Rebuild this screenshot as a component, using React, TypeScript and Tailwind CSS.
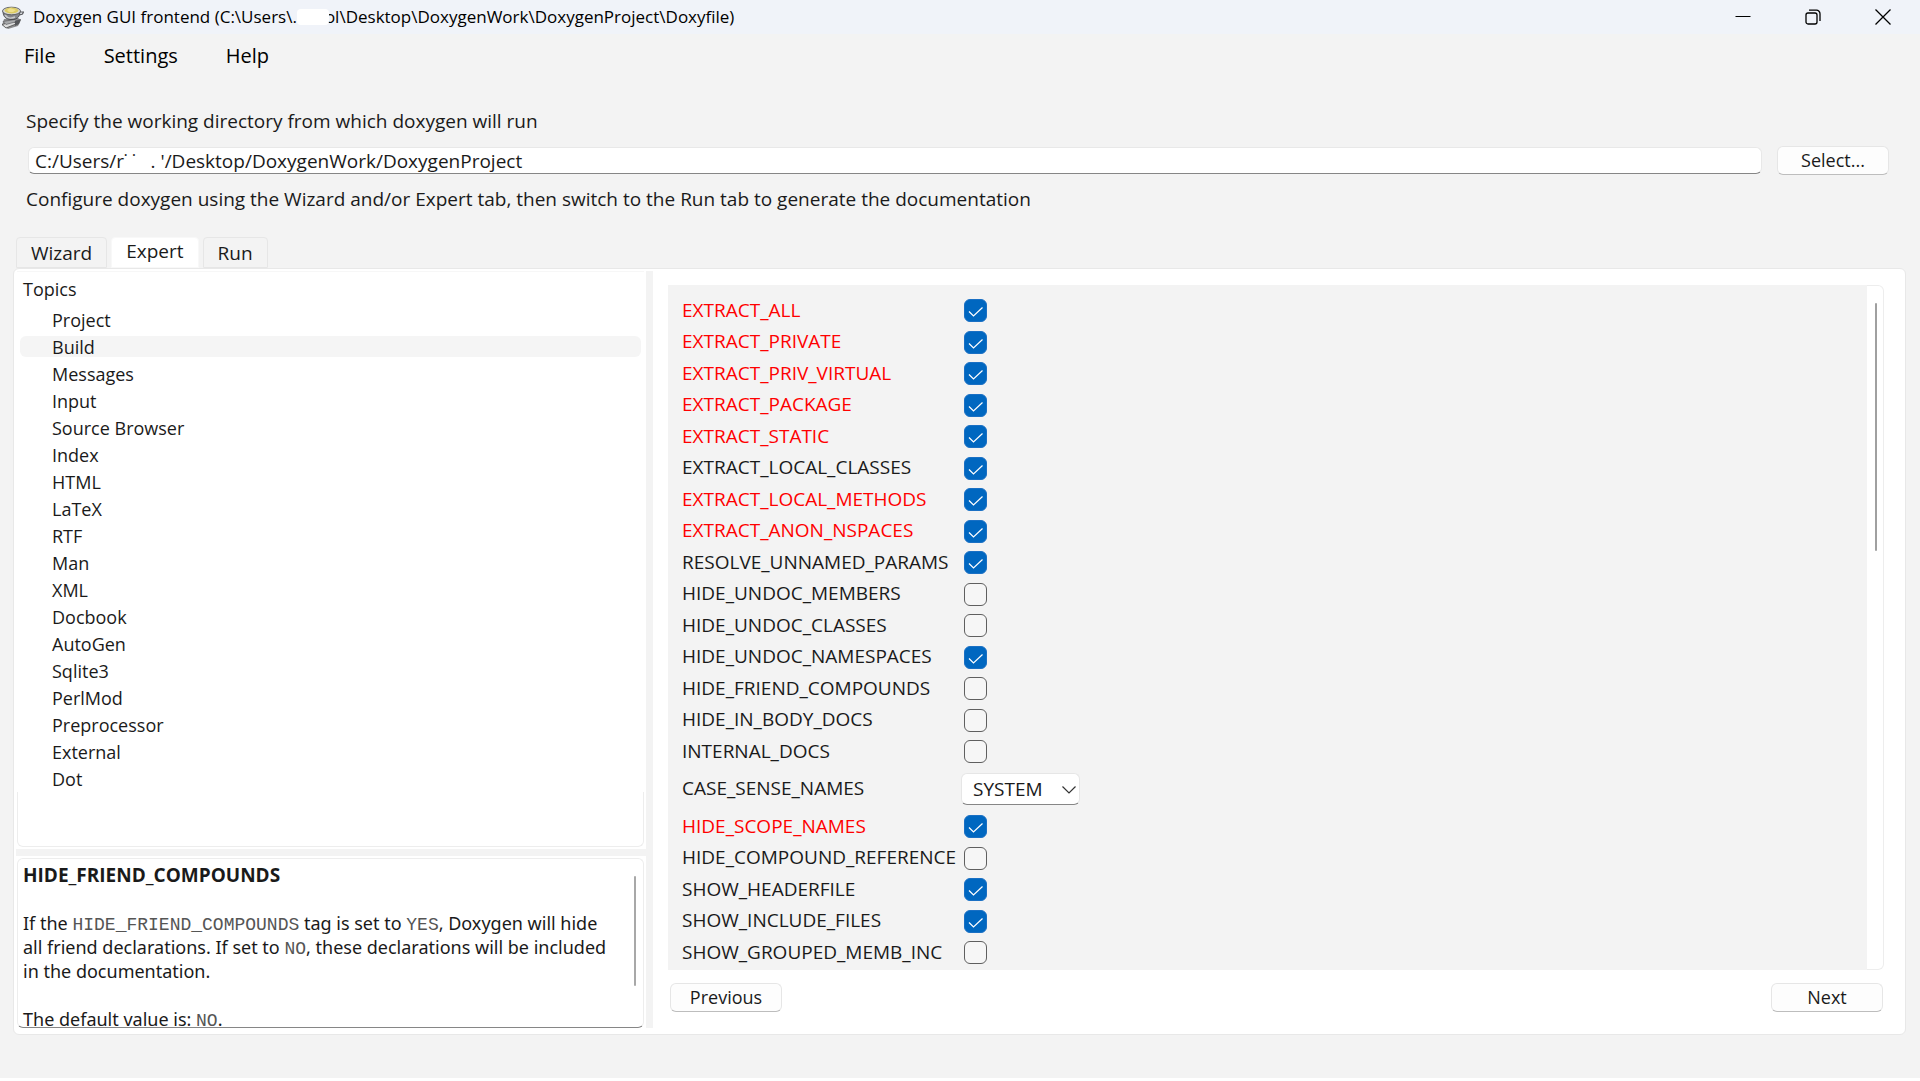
import { useState } from "react";
import clsx from "clsx";

interface Option {
  name: string;
  /** Differs from the doxygen default, drawn in red. */
  changed?: boolean;
  checked?: boolean;
  choices?: string[];
}

const TOPICS = [
  "Project",
  "Build",
  "Messages",
  "Input",
  "Source Browser",
  "Index",
  "HTML",
  "LaTeX",
  "RTF",
  "Man",
  "XML",
  "Docbook",
  "AutoGen",
  "Sqlite3",
  "PerlMod",
  "Preprocessor",
  "External",
  "Dot",
];

const OPTIONS: Option[] = [
  { name: "EXTRACT_ALL", changed: true, checked: true },
  { name: "EXTRACT_PRIVATE", changed: true, checked: true },
  { name: "EXTRACT_PRIV_VIRTUAL", changed: true, checked: true },
  { name: "EXTRACT_PACKAGE", changed: true, checked: true },
  { name: "EXTRACT_STATIC", changed: true, checked: true },
  { name: "EXTRACT_LOCAL_CLASSES", checked: true },
  { name: "EXTRACT_LOCAL_METHODS", changed: true, checked: true },
  { name: "EXTRACT_ANON_NSPACES", changed: true, checked: true },
  { name: "RESOLVE_UNNAMED_PARAMS", checked: true },
  { name: "HIDE_UNDOC_MEMBERS" },
  { name: "HIDE_UNDOC_CLASSES" },
  { name: "HIDE_UNDOC_NAMESPACES", checked: true },
  { name: "HIDE_FRIEND_COMPOUNDS" },
  { name: "HIDE_IN_BODY_DOCS" },
  { name: "INTERNAL_DOCS" },
  { name: "CASE_SENSE_NAMES", choices: ["SYSTEM", "NO", "YES"] },
  { name: "HIDE_SCOPE_NAMES", changed: true, checked: true },
  { name: "HIDE_COMPOUND_REFERENCE" },
  { name: "SHOW_HEADERFILE", checked: true },
  { name: "SHOW_INCLUDE_FILES", checked: true },
  { name: "SHOW_GROUPED_MEMB_INC" },
];

const pushButton =
  "h-[29px] w-28 shrink-0 rounded-md border border-[#e6e6e6] border-b-[#bdbdbd] bg-[#fdfdfd] pb-0.5 text-center text-lg leading-6";

function AppIcon() {
  return (
    <svg viewBox="0 0 24 24" className="size-6 shrink-0" aria-hidden="true">
      <path d="M4 14l14-1 3 2-3 6-10 3-6-4z" fill="#8b8b8d" />
      <path d="M2 19.500l12-3 2 2.500-10 4z" fill="#dcdcdc" stroke="#4b4b4b" strokeWidth="0.8" />
      <path d="M3 16.500l12-2 2 2-11 3z" fill="#a9aaac" stroke="#55565a" strokeWidth="0.6" />
      <path d="M15 16l6-2-2 5-4 2z" fill="#55565a" />
      <path d="M3 6c0 6 3 8.500 9 8.500s8-3.500 8-8.500z" fill="#85868a" stroke="#3f4042" strokeWidth="0.8" />
      <path d="M5 10c2 3 6 4 10 2" fill="none" stroke="#c9cacc" strokeWidth="1.4" />
      <ellipse cx="11.500" cy="6" rx="9" ry="3.800" fill="#d9d9d6" stroke="#55565a" strokeWidth="0.9" />
      <ellipse cx="11.500" cy="5.500" rx="7" ry="2.900" fill="#dccb62" />
      <path d="M7 5l3-2 3 1 3 1-3 2-4 0z" fill="#efe08c" />
      <path d="M20 7l3.500 0-1 2-3 1" fill="none" stroke="#55565a" strokeWidth="1.2" />
    </svg>
  );
}

function TitleBar() {
  return (
    <header className="flex h-[34px] items-center bg-[#f0f3f9] pr-0.5">
      <AppIcon />
      <h1 className="ml-[9px] flex items-center whitespace-pre text-[17px] text-black">
        Doxygen GUI frontend (C:\Users\.
        <span className="z-10 -mr-1 h-4 w-8 rounded bg-white" />
        ol\Desktop\DoxygenWork\DoxygenProject\Doxyfile)
      </h1>
      <div className="ml-auto flex h-full text-black">
        <button aria-label="Minimize" className="grid w-[70px] place-items-center">
          <svg viewBox="0 0 16 16" className="size-4" fill="none" stroke="currentColor">
            <path d="M0.500 7.500h15" />
          </svg>
        </button>
        <button aria-label="Restore" className="grid w-[70px] place-items-center">
          <svg viewBox="0 0 16 16" className="size-4" fill="none" stroke="currentColor" strokeWidth="1.300">
            <rect x="1" y="4" width="11" height="11" rx="2" />
            <path d="M4 1.200h7.500a3.500 3.500 0 0 1 3.500 3.500v7.300" />
          </svg>
        </button>
        <button aria-label="Close" className="grid w-[70px] place-items-center">
          <svg viewBox="0 0 16 16" className="size-4" fill="none" stroke="currentColor" strokeWidth="1.300">
            <path d="M0.500 0.500l15 15M15.500 0.500l-15 15" />
          </svg>
        </button>
      </div>
    </header>
  );
}

function TopicTree() {
  const [active, setActive] = useState("Build");
  return (
    <div className="flex flex-1 flex-col pl-px pr-0.5 text-lg">
      <div className="border-t border-[#f7f7f7] px-[3px]">
        <div className="flex h-[34px] items-center pl-[3px]">Topics</div>
        <ul>
          {TOPICS.map((t) => (
            <li key={t} className="flex h-[27px] items-center">
              <button
                onClick={() => setActive(t)}
                className={clsx(
                  "flex h-[21px] w-full items-center rounded-md pl-8 text-left",
                  t === active && "bg-[#f5f5f5]",
                )}
              >
                {t}
              </button>
            </li>
          ))}
        </ul>
      </div>
      <div className="flex-1 rounded-b-md border-x border-b border-[#ededed]" />
    </div>
  );
}

function HelpBox() {
  return (
    <div className="relative ml-px mr-0.5 h-[170px] overflow-hidden rounded-md border border-[#ededed] border-b-[#868686] pl-[5px] pt-1 leading-6">
      <p className="font-bold">HIDE_FRIEND_COMPOUNDS</p>
      <div className="font-['Noto_Sans',sans-serif] text-lg leading-6">
        <p className="mt-6">
          If the <Code>HIDE_FRIEND_COMPOUNDS</Code> tag is set to <Code>YES</Code>, Doxygen will hide
          <br />
          all friend declarations. If set to <Code>NO</Code>, these declarations will be included
          <br />
          in the documentation.
        </p>
        <p className="mt-6">
          The default value is: <Code>NO</Code>.
        </p>
      </div>
      <div className="absolute right-[7px] top-[17px] h-[110px] w-0.5 rounded bg-[#a8a8a8]" />
    </div>
  );
}

function Code({ children }: { children: string }) {
  return <code className="font-['Liberation_Mono',monospace] text-lg leading-none text-[#555]">{children}</code>;
}

function OptionRow({ option }: { option: Option }) {
  return (
    <div className={clsx("flex items-center", option.choices ? "h-11" : "odd:h-[31px] even:h-8")}>
      <label
        htmlFor={option.name}
        className={clsx("w-[282px] shrink-0 pb-0.5", option.changed && "text-[#ff0000]")}
      >
        {option.name}
      </label>
      {option.choices ? (
        <div className="relative -ml-[3px]">
          <select
            id={option.name}
            className="h-8 w-[119px] appearance-none rounded-md border border-[#e6e6e6] border-b-[#868686] bg-white pl-[11px]"
          >
            {option.choices.map((c) => (
              <option key={c}>{c}</option>
            ))}
          </select>
          <svg
            viewBox="0 0 14 8"
            className="pointer-events-none absolute right-1 top-[13px] h-2 w-3.5"
            fill="none"
            stroke="#333"
            strokeWidth="1.200"
          >
            <path d="M0.500 0.500l6.500 6.500 6.500-6.500" />
          </svg>
        </div>
      ) : (
        <div className="relative size-[23px]">
          <input
            id={option.name}
            type="checkbox"
            defaultChecked={option.checked}
            className="peer block size-[23px] appearance-none rounded-md border border-[#5f5f5f] bg-[#f6f6f6] checked:border-[#1a70c4] checked:bg-[#0067c0]"
          />
          <svg
            viewBox="0 0 23 23"
            className="pointer-events-none absolute inset-0 hidden peer-checked:block"
            fill="none"
            stroke="#fff"
            strokeWidth="1.200"
          >
            <path d="M5 12.500l4.500 4.500 9-8.500" />
          </svg>
        </div>
      )}
    </div>
  );
}

export default function App() {
  const [tab, setTab] = useState("Expert");

  return (
    <div className="flex min-h-screen flex-col border-b-[3px] border-white bg-[#f3f3f3] font-['Open_Sans','Noto_Sans',sans-serif] text-[19px] leading-6 text-[#1a1a1a]">
      <TitleBar />

      <nav className="flex h-11 items-center gap-12 pl-6 text-xl text-black">
        <button>File</button>
        <button>Settings</button>
        <button>Help</button>
      </nav>

      <section className="pl-[26px] pr-[31px] pt-[31px]">
        <label htmlFor="workdir" className="block">
          Specify the working directory from which doxygen will run
        </label>
        <div className="mt-[13px] flex items-center gap-[15px]">
          <input
            id="workdir"
            type="text"
            defaultValue="C:/Users/r˙ ˙   . '/Desktop/DoxygenWork/DoxygenProject"
            className="ml-0.5 h-[27px] min-w-0 flex-1 rounded-md border border-[#e8e8e8] border-b-[#868686] bg-white px-1.5"
          />
          <button className={pushButton}>Select...</button>
        </div>
        <p className="mt-3">
          Configure doxygen using the Wizard and/or Expert tab, then switch to the Run tab to generate the documentation
        </p>
      </section>

      <div role="tablist" className="mt-[26px] flex gap-1 pl-4">
        {["Wizard", "Expert", "Run"].map((t) => (
          <button
            key={t}
            role="tab"
            aria-selected={t === tab}
            onClick={() => setTab(t)}
            className={clsx(
              "h-[31px] rounded-t border px-3.5",
              t === tab ? "border-[#f8f8f8] bg-white pb-1" : "border-[#e6e6e6]",
            )}
          >
            {t}
          </button>
        ))}
      </div>

      <main className="mb-[43px] ml-[13px] mr-3.5 flex flex-1 rounded-md border border-[#e8e8e8] bg-white pb-1.5 pl-0.5 pt-0.5">
        <div className="flex w-[630px] shrink-0 flex-col">
          <TopicTree />
          <div className="my-0.5 h-[7px] bg-[#f3f3f3]" />
          <HelpBox />
        </div>
        <div className="w-[7px] shrink-0 bg-[#f3f3f3]" />

        <div className="flex min-w-0 flex-1 flex-col pb-4 pl-[15px] pr-[21px] pt-3.5">
          <div className="flex flex-1">
            <div className="flex-1 bg-[#f3f3f3] pl-3.5 pt-2.5">
              {OPTIONS.map((o) => (
                <OptionRow key={o.name} option={o} />
              ))}
            </div>
            <div className="w-[17px] rounded-r-md border border-l-0 border-[#ededed] pl-2 pt-[17px]">
              <div className="h-[248px] w-0.5 rounded bg-[#a0a0a0]" />
            </div>
          </div>
          <div className="mt-[13px] flex justify-between pl-0.5 pr-px">
            <button className={pushButton}>Previous</button>
            <button className={pushButton}>Next</button>
          </div>
        </div>
      </main>
    </div>
  );
}
